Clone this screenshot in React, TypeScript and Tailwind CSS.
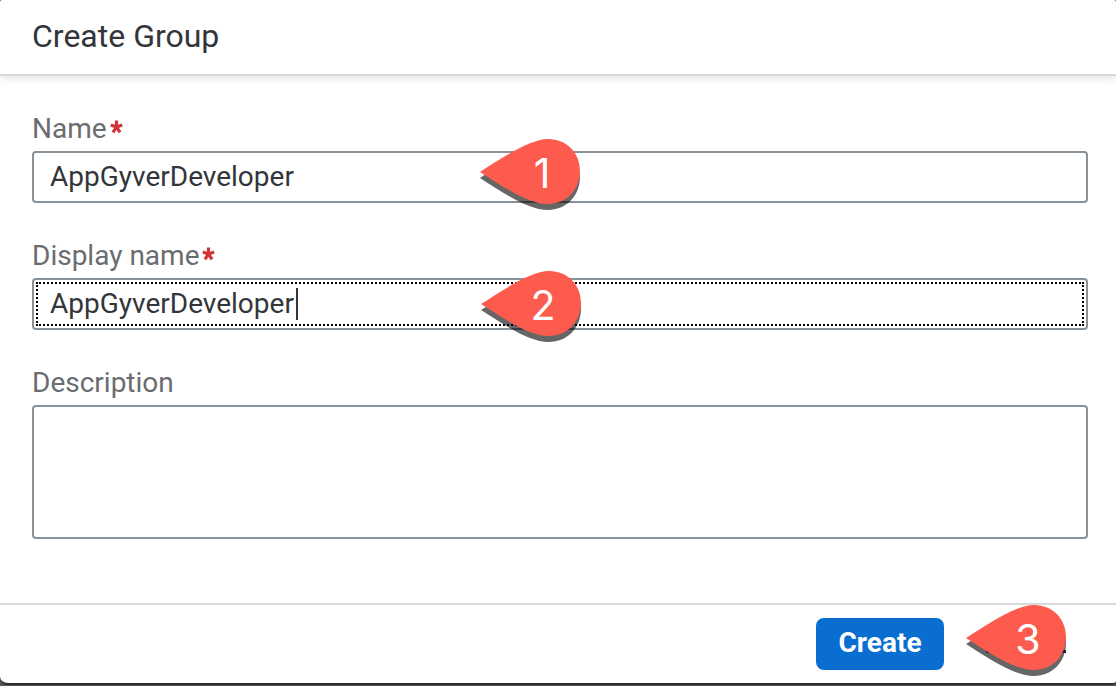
import React, { useState } from "react";

const PIN =
  "M0 33C22 19 50 0 68 0C87 0 100 14 100 32C100 51 86 65 68 65C48 65 22 47 0 33Z";

function Marker({
  step,
  className,
  children,
}: {
  step: number;
  className: string;
  children?: React.ReactNode;
}) {
  return (
    <svg
      viewBox="0 0 104 74"
      className={`pointer-events-none absolute h-[74px] w-[104px] ${className}`}
      role="img"
      aria-label={`Step ${step}`}
    >
      <path d={PIN} transform="translate(0 6)" fill="#000" fillOpacity="0.6" />
      {children}
      <path d={PIN} fill="#fd5b4e" />
      <text
        x="62"
        y="49"
        textAnchor="middle"
        fill="#fff"
        className="font-[Inter,sans-serif] text-[41px]"
      >
        {step}
      </text>
    </svg>
  );
}

function Label({
  htmlFor,
  required,
  children,
}: {
  htmlFor: string;
  required?: boolean;
  children: React.ReactNode;
}) {
  return (
    <label
      htmlFor={htmlFor}
      className="flex h-[43px] items-start gap-[3px] text-[28px] leading-[41px] text-[#6a6d70]"
    >
      {children}
      {required && (
        <svg viewBox="0 0 13 14" className="mt-3 h-[14px] w-[13px]" aria-hidden="true">
          <path
            d="M6.5 0.5V7M0.8 5L6.5 7L12.2 5M3 12.4L6.5 7L10 12.4"
            stroke="#d13438"
            strokeWidth="3.2"
            fill="none"
          />
        </svg>
      )}
    </label>
  );
}

const inputStyle =
  "block h-[52px] w-full rounded-sm border-2 border-[#89919a] bg-white px-4 pb-0.5 text-[28px] text-[#32363a] outline-none";

export default function App() {
  const [name, setName] = useState("AppGyverDeveloper");
  const [displayName, setDisplayName] = useState("AppGyverDeveloper");
  const [description, setDescription] = useState("");

  return (
    <div className="min-h-screen bg-[#555] pb-px font-[Roboto,sans-serif]">
      <form
        className="overflow-hidden rounded-t-xs rounded-br-sm rounded-bl-lg border-b-2 border-[#2e2c2c] bg-white"
        onSubmit={(e) => e.preventDefault()}
      >
        <header className="border-b-2 border-[#d9d9d9] px-8 shadow-[0_2px_8px_rgba(0,0,0,0.12)]">
          <h1 className="h-[74px] text-[32px] leading-[72px] text-[#32363a]">
            Create Group
          </h1>
        </header>

        <main className="flex flex-col gap-8 pt-8 pr-7 pb-16 pl-8">
          <div>
            <Label htmlFor="name" required>
              Name
            </Label>
            <div className="relative">
              <input
                id="name"
                required
                className={inputStyle}
                value={name}
                onChange={(e) => setName(e.target.value)}
              />
              <Marker step={1} className="-top-3 left-[448px]" />
            </div>
          </div>

          <div>
            <Label htmlFor="display-name" required>
              Display name
            </Label>
            <div className="relative">
              <input
                id="display-name"
                required
                className={inputStyle}
                value={displayName}
                onChange={(e) => setDisplayName(e.target.value)}
              />
              <span className="pointer-events-none absolute inset-1 border-2 border-dotted border-black" />
              <span className="pointer-events-none absolute top-[10px] left-[264px] h-8 w-0.5 bg-[#32363a]" />
              <Marker step={2} className="-top-[7px] left-[449px]" />
            </div>
          </div>

          <div>
            <Label htmlFor="description">Description</Label>
            <textarea
              id="description"
              className="block h-[134px] w-full resize-none rounded-sm border-2 border-[#89919a] bg-white px-4 py-2 text-[28px] text-[#32363a] outline-none"
              value={description}
              onChange={(e) => setDescription(e.target.value)}
            />
          </div>
        </main>

        <footer className="relative flex h-20 items-center justify-end border-t-2 border-[#d9d9d9] pr-[172px]">
          <button
            type="submit"
            className="h-[52px] w-32 rounded-lg bg-[#0a6ed1] pb-0.5 text-[28px] font-bold text-white"
          >
            Create
          </button>
          <Marker step={3} className="top-0 right-[46px]">
            <path d="M97 45H100V48H96ZM19 45L24 48H21Z" fill="#0b2a50" />
          </Marker>
        </footer>
      </form>
    </div>
  );
}
